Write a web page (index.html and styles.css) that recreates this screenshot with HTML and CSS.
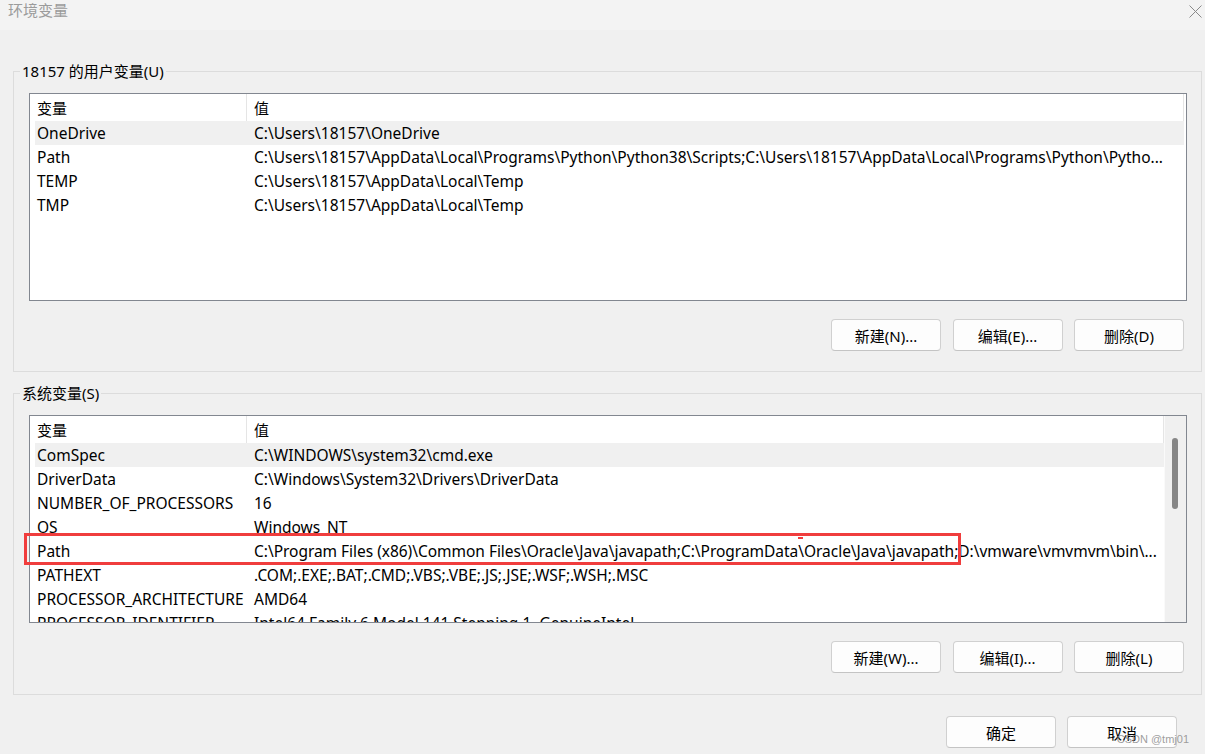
FILE: index.html
```html
<!DOCTYPE html>
<html lang="zh-CN">
<head>
<meta charset="utf-8">
<title>环境变量</title>
<link rel="stylesheet" href="styles.css">
</head>
<body>
<div class="window">
  <div class="titlebar">
    <span class="title">环境变量</span>
    <svg class="close" width="13" height="13" viewBox="0 0 13 13"><path d="M0.5 0.5 L12.5 12.5 M12.5 0.5 L0.5 12.5" stroke="#8a8a8a" stroke-width="1" fill="none"/></svg>
  </div>

  <fieldset class="group group-user">
    <legend>18157 的用户变量(U)</legend>
    <div class="listwrap">
      <div class="list">
        <div class="table">
          <div class="row head"><div class="c1">变量</div><div class="c2">值</div></div>
          <div class="row sel"><div class="c1">OneDrive</div><div class="c2">C:\Users\18157\OneDrive</div></div>
          <div class="row"><div class="c1">Path</div><div class="c2">C:\Users\18157\AppData\Local\Programs\Python\Python38\Scripts;C:\Users\18157\AppData\Local\Programs\Python\Pytho...</div></div>
          <div class="row"><div class="c1">TEMP</div><div class="c2">C:\Users\18157\AppData\Local\Temp</div></div>
          <div class="row"><div class="c1">TMP</div><div class="c2">C:\Users\18157\AppData\Local\Temp</div></div>
        </div>
      </div>
    </div>
    <div class="btns">
      <button class="btn">新建(N)...</button>
      <button class="btn">编辑(E)...</button>
      <button class="btn">删除(D)</button>
    </div>
  </fieldset>

  <fieldset class="group group-sys">
    <legend>系统变量(S)</legend>
    <div class="listwrap">
      <div class="list">
        <div class="table">
          <div class="row head"><div class="c1">变量</div><div class="c2">值</div></div>
          <div class="row sel"><div class="c1">ComSpec</div><div class="c2">C:\WINDOWS\system32\cmd.exe</div></div>
          <div class="row"><div class="c1">DriverData</div><div class="c2">C:\Windows\System32\Drivers\DriverData</div></div>
          <div class="row"><div class="c1">NUMBER_OF_PROCESSORS</div><div class="c2">16</div></div>
          <div class="row"><div class="c1">OS</div><div class="c2">Windows_NT</div></div>
          <div class="row"><div class="c1">Path</div><div class="c2 narrow">C:\Program Files (x86)\Common Files\Oracle\Java\javapath;C:\ProgramData\Oracle\Java\javapath;D:\vmware\vmvmvm\bin\...</div></div>
          <div class="row"><div class="c1">PATHEXT</div><div class="c2">.COM;.EXE;.BAT;.CMD;.VBS;.VBE;.JS;.JSE;.WSF;.WSH;.MSC</div></div>
          <div class="row"><div class="c1">PROCESSOR_ARCHITECTURE</div><div class="c2">AMD64</div></div>
          <div class="row"><div class="c1">PROCESSOR_IDENTIFIER</div><div class="c2">Intel64 Family 6 Model 141 Stepping 1, GenuineIntel</div></div>
        </div>
        <div class="scrollbar"><div class="thumb"></div></div>
      </div>
      <div class="mark-box"></div>
      <div class="mark-dot"></div>
    </div>
    <div class="btns">
      <button class="btn">新建(W)...</button>
      <button class="btn">编辑(I)...</button>
      <button class="btn">删除(L)</button>
    </div>
  </fieldset>

  <div class="footer">
    <button class="btn">确定</button>
    <button class="btn">取消</button>
    <span class="watermark">CSDN @tmj01</span>
  </div>
</div>
</body>
</html>
```

FILE: styles.css
```css
html, body {
  margin: 0;
  padding: 0;
}
body {
  background: #f0f0f0;
  font-family: "Noto Sans", "Noto Sans CJK SC", sans-serif;
  font-size: 15.5px;
  color: #000;
  width: 1205px;
  height: 754px;
  overflow: hidden;
}
.window {
  width: 1205px;
  height: 754px;
  display: flex;
  flex-direction: column;
}
.titlebar {
  height: 30px;
  background: #f3f3f3;
  display: flex;
  justify-content: space-between;
  align-items: flex-start;
  padding: 0 3px 0 8px;
  box-sizing: border-box;
}
.title {
  font-family: "Noto Sans CJK SC", sans-serif;
  font-size: 15px;
  line-height: 20px;
  color: #9b9b9b;
}
.close {
  margin-top: 5px;
}
.group {
  margin: 0 3px 0 13px;
  padding: 12px 14px 20px 6px;
  border: 1px solid #dcdcdc;
  min-width: 0;
}
.group-user { margin-top: 31px; }
.group-sys { margin-top: 11px; padding-bottom: 21px; }
.group legend {
  padding: 0 2px;
  font-size: 15px;
  line-height: 20px;
  font-family: "Noto Sans", "Noto Sans CJK SC", sans-serif;
}
.listwrap {
  position: relative;
  margin-left: 9px;
}
.list {
  height: 208px;
  box-sizing: border-box;
  border: 1px solid #828790;
  background: #fff;
  overflow: hidden;
  display: flex;
}
.table {
  flex: 1;
  min-width: 0;
  padding: 0 2px 0 0;
}
.row {
  display: grid;
  grid-template-columns: 217px 1fr;
  height: 24px;
  line-height: 24px;
  white-space: nowrap;
}
.row .c1 {
  padding-left: 7px;
  overflow: hidden;
}
.row .c2 {
  padding-left: 7px;
  overflow: hidden;
}
.row .c2.narrow {
  letter-spacing: -0.03px;
}
.row.sel {
  background: #f0f0f0;
  margin-left: 5px;
  grid-template-columns: 212px 1fr;
}
.row.sel .c1 { padding-left: 2px; }
.row.head {
  height: 27px;
  line-height: 27px;
  font-family: "Noto Sans CJK SC", sans-serif;
  font-size: 15px;
}
.row.head .c1 {
  border-right: 1px solid #e5e5e5;
}
.row.head .c2 {
  border-right: 1px solid #e5e5e5;
}
.scrollbar {
  width: 22px;
  flex: none;
  background: #f0f0f0;
  border-left: 1px solid #fafafa;
  box-sizing: border-box;
}
.thumb {
  width: 6px;
  height: 71px;
  margin: 22px 0 0 7px;
  background: #868686;
  border-radius: 3px;
}
.group-sys .table { padding-right: 0; }
.btns {
  display: flex;
  justify-content: flex-end;
  gap: 11.5px;
  margin-top: 18px;
  padding-right: 3px;
}
.btn {
  width: 110px;
  height: 32px;
  box-sizing: border-box;
  border: 1px solid #d0d0d0;
  border-bottom-color: #c4c4c4;
  border-radius: 4px;
  background: #fdfdfd;
  font-family: "Noto Sans", "Noto Sans CJK SC", sans-serif;
  font-size: 15px;
  color: #000;
  padding: 0;
}
.footer {
  position: relative;
  display: flex;
  justify-content: flex-end;
  gap: 11px;
  margin-top: 21px;
  padding-right: 28px;
}
.mark-box {
  position: absolute;
  left: -5px;
  top: 118px;
  width: 937px;
  height: 32px;
  box-sizing: border-box;
  border: 3px solid #f03d3d;
}
.mark-dot {
  position: absolute;
  left: 769px;
  top: 122px;
  width: 5px;
  height: 2px;
  background: #f03d3d;
}
.watermark {
  position: absolute;
  right: 16px;
  bottom: 2px;
  font-family: "Liberation Sans", sans-serif;
  font-size: 11px;
  line-height: 13px;
  color: rgba(140, 140, 140, 0.85);
}
```
